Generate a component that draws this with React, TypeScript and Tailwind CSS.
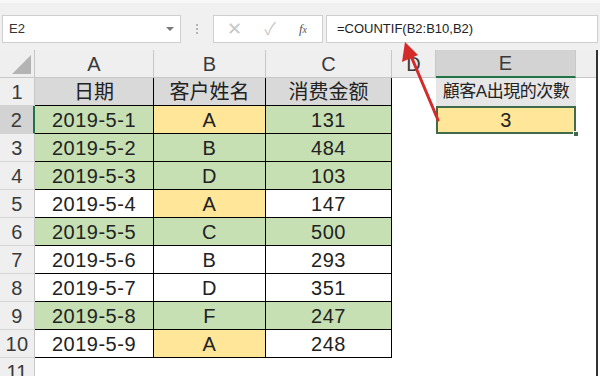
import React from "react"

type Row = {
  date: string
  name: string
  amount: string
  fill: [string, string, string]
}

const G = "bg-[#c6e0b4]"
const Y = "bg-[#ffe699]"
const W = "bg-white"

const rows: Row[] = [
  { date: "2019-5-1", name: "A", amount: "131", fill: [G, Y, G] },
  { date: "2019-5-2", name: "B", amount: "484", fill: [G, G, G] },
  { date: "2019-5-3", name: "D", amount: "103", fill: [G, G, G] },
  { date: "2019-5-4", name: "A", amount: "147", fill: [W, Y, W] },
  { date: "2019-5-5", name: "C", amount: "500", fill: [G, G, G] },
  { date: "2019-5-6", name: "B", amount: "293", fill: [W, W, W] },
  { date: "2019-5-7", name: "D", amount: "351", fill: [W, W, W] },
  { date: "2019-5-8", name: "F", amount: "247", fill: [G, G, G] },
  { date: "2019-5-9", name: "A", amount: "248", fill: [W, Y, W] },
]

const font = "font-['Liberation_Sans','Noto_Sans_CJK_SC',sans-serif]"

function RowHead({ n, active }: { n: number; active?: boolean }) {
  return (
    <div
      className={`w-[35px] shrink-0 h-full flex items-center justify-center text-[20px] text-[#3a3a3a] border-b border-[#d4d4d4] ${
        active ? "bg-[#d3d3d3] border-r-2 border-r-[#217346]" : "bg-[#efefef] border-r border-r-[#c8c8c8]"
      }`}
    >
      {n}
    </div>
  )
}

export default function App() {
  return (
    <div className={`w-[600px] h-[376px] bg-white relative overflow-hidden ${font}`}>
      {/* formula bar */}
      <div className="h-[50px] bg-[#f0f0f0] flex items-start pt-[12px] border-t-[3px] border-[#f8f8f8]">
        <div className="ml-[2px] w-[179px] h-[28px] bg-white border border-[#cfcfcf] flex items-center justify-between pl-[6px] pr-[6px] text-[13px] text-[#333]">
          <span>E2</span>
          <span className="w-0 h-0 border-l-[4px] border-r-[4px] border-t-[4px] border-l-transparent border-r-transparent border-t-[#777]" />
        </div>
        <div className="w-[32px] h-[28px] flex flex-col items-center justify-center gap-[2px]">
          <span className="w-[2px] h-[2px] bg-[#b5b5b5]" />
          <span className="w-[2px] h-[2px] bg-[#b5b5b5]" />
          <span className="w-[2px] h-[2px] bg-[#b5b5b5]" />
        </div>
        <div className="w-[110px] h-[28px] bg-white border border-[#cfcfcf] flex items-center text-[#c8c8c8]">
          <span className="w-[36px] text-center text-[18px] leading-none ml-[2px]">✕</span>
          <span className="w-[36px] text-center text-[17px] leading-none">✓</span>
          <span className="w-[30px] text-center text-[13px] italic text-[#555] font-['Liberation_Serif',serif]">
            f<span className="text-[10px]">x</span>
          </span>
        </div>
        <div className="ml-[3px] flex-1 mr-[2px] h-[28px] bg-white border border-[#cfcfcf] flex items-center pl-[10px] text-[13px] text-[#222]">
          =COUNTIF(B2:B10,B2)
        </div>
      </div>

      {/* sheet */}
      <div className="w-[598px] border-r-[2px] border-[#333]">
        {/* column header */}
        <div className="flex h-[28px] bg-[#efefef] text-[20px] text-[#3a3a3a]">
          <div className="w-[35px] shrink-0 h-full relative border-r border-b border-[#c8c8c8]">
            <svg className="absolute right-[3px] bottom-[3px]" width="19" height="19">
              <polygon points="19,0 19,19 0,19" fill="#b4b4b4" />
            </svg>
          </div>
          <div className="w-[119px] shrink-0 flex items-center justify-center border-r border-b border-[#c8c8c8]">A</div>
          <div className="w-[112px] shrink-0 flex items-center justify-center border-r border-b border-[#c8c8c8]">B</div>
          <div className="w-[126px] shrink-0 flex items-center justify-center border-r border-b border-[#c8c8c8]">C</div>
          <div className="w-[44px] shrink-0 flex items-center justify-center border-r border-b border-[#c8c8c8]">D</div>
          <div className="w-[140px] shrink-0 flex items-center justify-center bg-[#d3d3d3] border-r border-r-[#c8c8c8] border-b-2 border-b-[#217346]">E</div>
          <div className="flex-1 border-b border-[#c8c8c8]" />
        </div>

        {/* row 1 */}
        <div className="flex h-[28px] text-[20px]">
          <RowHead n={1} />
          <div className="w-[119px] shrink-0 flex items-center justify-center bg-[#d9d9d9] border-r border-b border-black text-[#222]">日期</div>
          <div className="w-[112px] shrink-0 flex items-center justify-center bg-[#d9d9d9] border-r border-b border-black text-[#222]">客户姓名</div>
          <div className="w-[126px] shrink-0 flex items-center justify-center bg-[#d9d9d9] border-r border-b border-black text-[#222]">消费金额</div>
          <div className="w-[44px] shrink-0" />
          <div className="w-[140px] shrink-0 flex items-center justify-center bg-[#e6e6e6] text-[17px] text-[#222] tracking-[-0.5px] whitespace-nowrap">
            顧客A出現的次數
          </div>
          <div className="flex-1" />
        </div>

        {rows.map((r, i) => (
          <div key={i} className="flex h-[28px] text-[20px] text-[#222] tracking-[0.5px]">
            <RowHead n={i + 2} active={i === 0} />
            <div className={`w-[119px] shrink-0 flex items-center justify-center border-r border-b border-black ${r.fill[0]}`}>{r.date}</div>
            <div className={`w-[112px] shrink-0 flex items-center justify-center border-r border-b border-black ${r.fill[1]}`}>{r.name}</div>
            <div className={`w-[126px] shrink-0 flex items-center justify-center border-r border-b border-black ${r.fill[2]}`}>{r.amount}</div>
            <div className="w-[44px] shrink-0" />
            {i === 0 ? (
              <div className="w-[140px] shrink-0 relative flex items-center justify-center bg-[#ffe699] border-2 border-[#3f6a4b]">
                3
                <span className="absolute right-[-5px] bottom-[-5px] w-[6px] h-[6px] bg-[#3f6a4b] border border-white" />
              </div>
            ) : (
              <div className="w-[140px] shrink-0" />
            )}
            <div className="flex-1" />
          </div>
        ))}

        {/* row 11 */}
        <div className="flex h-[28px] text-[20px]">
          <RowHead n={11} />
          <div className="flex-1" />
        </div>
      </div>

      {/* red arrow annotation */}
      <svg className="absolute left-0 top-0 pointer-events-none" width="600" height="376">
        <line x1="438" y1="120" x2="411" y2="56" stroke="#d42a2a" strokeWidth="3" strokeLinecap="round" />
        <polygon points="405,42 402,62 418,55" fill="#d42a2a" />
      </svg>
    </div>
  )
}
